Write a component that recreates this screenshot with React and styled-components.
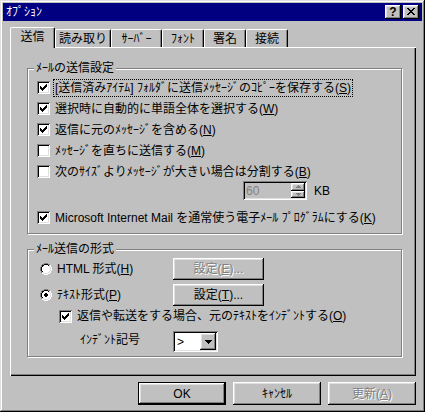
import React from 'react';
import styled, { createGlobalStyle, css } from 'styled-components';

const GlobalStyle = createGlobalStyle`
  html, body { margin: 0; padding: 0; background: #c0c0c0; }
  body {
    font-family: "Liberation Sans", "Noto Sans CJK JP", sans-serif;
    font-size: 12px;
    color: #000;
  }
  * { box-sizing: border-box; }
`;

const raised = css`
  box-shadow: inset -1px -1px #000, inset 1px 1px #fff, inset -2px -2px #808080, inset 2px 2px #dfdfdf;
`;
const sunken = css`
  box-shadow: inset 1px 1px #808080, inset -1px -1px #fff, inset 2px 2px #000, inset -2px -2px #dfdfdf;
`;

const Window = styled.div`
  width: 425px;
  height: 412px;
  background: #c0c0c0;
  padding: 3px;
  box-shadow: inset -1px -1px #000, inset 1px 1px #dfdfdf, inset -2px -2px #808080, inset 2px 2px #fff;
  display: flex;
  flex-direction: column;
`;

const TitleBar = styled.div`
  height: 18px;
  flex: none;
  background: #000080;
  color: #fff;
  display: flex;
  align-items: center;
  padding: 0 3px 0 3px;
`;

const TitleText = styled.span`
  line-height: 14px;
  font-size: 12px;
`;

const TitleButtons = styled.div`
  margin-left: auto;
  display: flex;
  gap: 2px;
`;

const TitleButton = styled.div`
  width: 16px;
  height: 14px;
  background: #c0c0c0;
  ${raised};
  display: flex;
  align-items: center;
  justify-content: center;
  color: #000;
  font-weight: bold;
  font-size: 12px;
  line-height: 12px;
  padding-bottom: 1px;
`;

const Body = styled.div`
  flex: 1;
  display: flex;
  flex-direction: column;
  padding: 6px 6px 0 7px;
`;

const TabStrip = styled.div`
  display: flex;
  align-items: flex-end;
  height: 20px;
  flex: none;
  position: relative;
  z-index: 1;
`;

const Tab = styled.div`
  width: ${p => p.$w}px;
  height: ${p => (p.$active ? 21 : 18)}px;
  margin-bottom: ${p => (p.$active ? -1 : 0)}px;
  padding-bottom: ${p => (p.$active ? 2 : 0)}px;
  display: flex;
  align-items: center;
  justify-content: center;
  background: #c0c0c0;
  border-top: 1px solid #fff;
  border-left: 1px solid #fff;
  border-right: 1px solid #000;
  border-radius: 2px 2px 0 0;
  box-shadow: inset -1px 0 #808080;
  line-height: 14px;
  white-space: nowrap;
`;

const Panel = styled.div`
  height: 329px;
  flex: none;
  background: #c0c0c0;
  box-shadow: inset 1px 1px #fff, inset -1px -1px #000, inset -2px -2px #808080;
  padding: 21px 14px 0 17px;
  display: flex;
  flex-direction: column;
  gap: 15px;
`;

const Group = styled.div`
  position: relative;
  border: 1px solid #808080;
  box-shadow: inset 1px 1px #fff, 1px 1px 0 #fff;
  padding: ${p => p.$pad};
  display: flex;
  flex-direction: column;
`;

const Legend = styled.span`
  position: absolute;
  top: -8px;
  left: 6px;
  padding: 0 2px;
  background: #c0c0c0;
  line-height: 14px;
  white-space: nowrap;
`;

const CheckRow = styled.div`
  display: flex;
  align-items: center;
  gap: 5px;
  height: ${p => p.$h || 21}px;
  margin-top: ${p => p.$mt || 0}px;
  padding-left: ${p => p.$indent || 0}px;
  line-height: 14px;
  white-space: nowrap;
`;

const CheckBox = styled.span`
  width: 13px;
  height: 13px;
  flex: none;
  background: #fff;
  ${sunken};
  display: flex;
  align-items: center;
  justify-content: center;
`;

const FocusLabel = styled.span`
  border: 1px dotted #000;
  padding: 1px 1px;
  margin-left: -2px;
`;

const SpinRow = styled.div`
  display: flex;
  align-items: center;
  gap: 7px;
  height: 19px;
  margin-top: -1px;
  padding-left: 206px;
`;

const Spinner = styled.div`
  width: 64px;
  height: 19px;
  background: #c0c0c0;
  ${sunken};
  padding: 2px 2px 2px 3px;
  display: flex;
  align-items: center;
`;

const SpinText = styled.span`
  flex: 1;
  color: #808080;
  line-height: 14px;
`;

const SpinButtons = styled.div`
  width: 14px;
  height: 15px;
  display: flex;
  flex-direction: column;
`;

const SpinButton = styled.div`
  flex: 1;
  background: #c0c0c0;
  ${raised};
  display: flex;
  align-items: center;
  justify-content: center;
`;

const Label = styled.span`
  line-height: 14px;
`;

const OptionRow = styled.div`
  display: grid;
  grid-template-columns: 133px 91px;
  align-items: center;
  height: 22px;
  margin-top: ${p => p.$mt || 0}px;
`;

const RadioLabel = styled.div`
  display: flex;
  align-items: center;
  gap: 5px;
  line-height: 14px;
  white-space: nowrap;
`;

const PushButton = styled.div`
  width: ${p => p.$w}px;
  height: ${p => p.$h}px;
  background: #c0c0c0;
  ${raised};
  display: flex;
  align-items: center;
  justify-content: center;
  line-height: 14px;
  white-space: nowrap;
  color: ${p => (p.$disabled ? '#808080' : '#000')};
  text-shadow: ${p => (p.$disabled ? '1px 1px 0 #fff' : 'none')};
  ${p =>
    p.$default &&
    css`
      box-shadow: inset 0 0 0 1px #000, inset -2px -2px #000, inset 2px 2px #fff, inset -3px -3px #808080,
        inset 3px 3px #dfdfdf;
    `}
`;

const IndentRow = styled.div`
  display: grid;
  grid-template-columns: 133px 45px;
  align-items: center;
  height: 21px;
  margin-top: 5px;
`;

const IndentLabel = styled.span`
  padding-left: 40px;
  padding-bottom: 4px;
  line-height: 14px;
  white-space: nowrap;
`;

const Combo = styled.div`
  width: 45px;
  height: 21px;
  background: #fff;
  ${sunken};
  padding: 2px;
  display: flex;
  align-items: center;
`;

const ComboText = styled.span`
  flex: 1;
  padding-left: 2px;
  line-height: 14px;
`;

const ComboButton = styled.div`
  width: 16px;
  height: 17px;
  background: #c0c0c0;
  ${raised};
  display: flex;
  align-items: center;
  justify-content: center;
`;

const Footer = styled.div`
  display: flex;
  justify-content: flex-end;
  gap: 7px;
  margin-top: 6px;
`;

const PixelSvg = styled.svg`
  display: block;
  flex: none;
  shape-rendering: crispEdges;
`;

function PixelArt({ rows, colors }) {
  const h = rows.length;
  const w = rows[0].length;
  const rects = [];
  rows.forEach((r, y) => {
    [...r].forEach((c, x) => {
      if (colors[c]) rects.push(<rect key={`${x}-${y}`} x={x} y={y} width={1} height={1} fill={colors[c]} />);
    });
  });
  return (
    <PixelSvg width={w} height={h} viewBox={`0 0 ${w} ${h}`}>
      {rects}
    </PixelSvg>
  );
}

const CHECK = ['......k', '.....kk', 'k...kkk', 'kk.kkk.', 'kkkkk..', '.kkk...', '..k....'];

const RADIO_ON = [
  '....gggg....',
  '..ggkkkkgg..',
  '.gkkffffklw.',
  '.gkfffffflw.',
  'gkfffddffflw',
  'gkffddddfflw',
  'gkffddddfflw',
  'gkfffddffflw',
  '.gkfffffflw.',
  '.gllffffllw.',
  '..wwllllww..',
  '....wwww....',
];
const RADIO_OFF = RADIO_ON.map(r => r.replace(/d/g, 'f'));
const RADIO_COLORS = { g: '#808080', k: '#000', w: '#fff', l: '#dfdfdf', f: '#fff', d: '#000' };

const CLOSE_X = ['kk....kk', '.kk..kk.', '..kkkk..', '...kk...', '..kkkk..', '.kk..kk.', 'kk....kk'];
const UP = ['..g..', '.ggg.', 'ggggg'];
const DOWN = ['ggggg', '.ggg.', '..g..'];
const COMBO_DOWN = ['kkkkkkk', '.kkkkk.', '..kkk..', '...k...'];

const Check = ({ checked }) => (
  <CheckBox>{checked && <PixelArt rows={CHECK} colors={{ k: '#000' }} />}</CheckBox>
);

const Radio = ({ checked }) => <PixelArt rows={checked ? RADIO_ON : RADIO_OFF} colors={RADIO_COLORS} />;

const tabs = [
  { t: '送信', w: 45, active: true },
  { t: '読み取り', w: 56 },
  { t: 'ｻｰﾊﾞｰ', w: 51 },
  { t: 'ﾌｫﾝﾄ', w: 42 },
  { t: '署名', w: 42 },
  { t: '接続', w: 42 },
];

export default function App() {
  return (
    <>
      <GlobalStyle />
      <Window>
        <TitleBar>
          <TitleText>ｵﾌﾟｼｮﾝ</TitleText>
          <TitleButtons>
            <TitleButton>?</TitleButton>
            <TitleButton>
              <PixelArt rows={CLOSE_X} colors={{ k: '#000' }} />
            </TitleButton>
          </TitleButtons>
        </TitleBar>
        <Body>
          <TabStrip>
            {tabs.map(tab => (
              <Tab key={tab.t} $w={tab.w} $active={tab.active}>
                {tab.t}
              </Tab>
            ))}
          </TabStrip>
          <Panel>
            <Group $pad="8px 0 5px 9px">
              <Legend>ﾒｰﾙの送信設定</Legend>
              <CheckRow>
                <Check checked />
                <FocusLabel>
                  [送信済みｱｲﾃﾑ] ﾌｫﾙﾀﾞに送信ﾒｯｾｰｼﾞのｺﾋﾟｰを保存する(<u>S</u>)
                </FocusLabel>
              </CheckRow>
              <CheckRow>
                <Check checked />
                <span>
                  選択時に自動的に単語全体を選択する(<u>W</u>)
                </span>
              </CheckRow>
              <CheckRow>
                <Check checked />
                <span>
                  返信に元のﾒｯｾｰｼﾞを含める(<u>N</u>)
                </span>
              </CheckRow>
              <CheckRow>
                <Check />
                <span>
                  ﾒｯｾｰｼﾞを直ちに送信する(<u>M</u>)
                </span>
              </CheckRow>
              <CheckRow>
                <Check />
                <span>
                  次のｻｲｽﾞよりﾒｯｾｰｼﾞが大きい場合は分割する(<u>B</u>)
                </span>
              </CheckRow>
              <SpinRow>
                <Spinner>
                  <SpinText>60</SpinText>
                  <SpinButtons>
                    <SpinButton>
                      <PixelArt rows={UP} colors={{ g: '#808080' }} />
                    </SpinButton>
                    <SpinButton>
                      <PixelArt rows={DOWN} colors={{ g: '#808080' }} />
                    </SpinButton>
                  </SpinButtons>
                </Spinner>
                <Label>KB</Label>
              </SpinRow>
              <CheckRow $mt={7}>
                <Check checked />
                <span>
                  Microsoft Internet Mail を通常使う電子ﾒｰﾙ ﾌﾟﾛｸﾞﾗﾑにする(<u>K</u>)
                </span>
              </CheckRow>
            </Group>
            <Group $pad="8px 0 4px 12px">
              <Legend>ﾒｰﾙ送信の形式</Legend>
              <OptionRow>
                <RadioLabel>
                  <Radio />
                  <span>
                    HTML 形式(<u>H</u>)
                  </span>
                </RadioLabel>
                <PushButton $w={91} $h={22} $disabled>
                  <span>
                    設定(<u>E</u>)...
                  </span>
                </PushButton>
              </OptionRow>
              <OptionRow $mt={4}>
                <RadioLabel>
                  <Radio checked />
                  <span>
                    ﾃｷｽﾄ形式(<u>P</u>)
                  </span>
                </RadioLabel>
                <PushButton $w={91} $h={22}>
                  <span>
                    設定(<u>T</u>)...
                  </span>
                </PushButton>
              </OptionRow>
              <CheckRow $h={20} $indent={19}>
                <Check checked />
                <span>
                  返信や転送をする場合、元のﾃｷｽﾄをｲﾝﾃﾞﾝﾄする(<u>O</u>)
                </span>
              </CheckRow>
              <IndentRow>
                <IndentLabel>ｲﾝﾃﾞﾝﾄ記号</IndentLabel>
                <Combo>
                  <ComboText>&gt;</ComboText>
                  <ComboButton>
                    <PixelArt rows={COMBO_DOWN} colors={{ k: '#000' }} />
                  </ComboButton>
                </Combo>
              </IndentRow>
            </Group>
          </Panel>
          <Footer>
            <PushButton $w={88} $h={23} $default>
              OK
            </PushButton>
            <PushButton $w={88} $h={23}>
              ｷｬﾝｾﾙ
            </PushButton>
            <PushButton $w={88} $h={23} $disabled>
              <span>
                更新(<u>A</u>)
              </span>
            </PushButton>
          </Footer>
        </Body>
      </Window>
    </>
  );
}
